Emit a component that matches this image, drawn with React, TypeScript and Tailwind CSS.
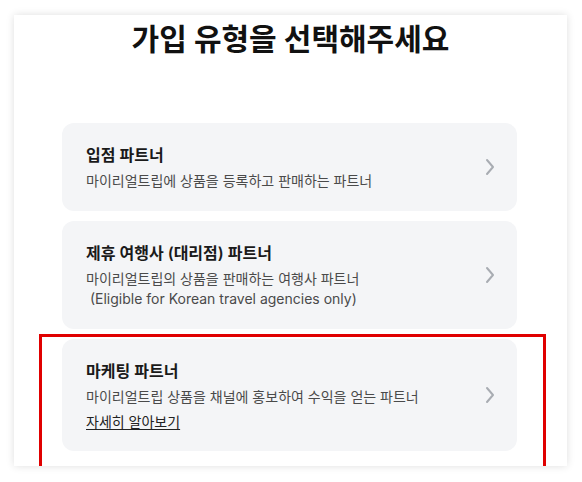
import React from "react";

const partnerTypes = [
  {
    title: "입점 파트너",
    desc: ["마이리얼트립에 상품을 등록하고 판매하는 파트너"],
  },
  {
    title: "제휴 여행사 (대리점) 파트너",
    desc: [
      "마이리얼트립의 상품을 판매하는 여행사 파트너",
      " (Eligible for Korean travel agencies only)",
    ],
  },
  {
    title: "마케팅 파트너",
    desc: ["마이리얼트립 상품을 채널에 홍보하여 수익을 얻는 파트너"],
    more: "자세히 알아보기",
  },
];

const Chevron = () => (
  <svg width="10" height="18" viewBox="0 0 10 18" fill="none" className="shrink-0">
    <path
      d="M2 2 L8 9 L2 16"
      stroke="#a8acb2"
      strokeWidth="2"
      strokeLinecap="round"
      strokeLinejoin="round"
    />
  </svg>
);

const App = () => {
  return (
    <div
      className="h-[482px] w-full bg-white pt-[15px] pl-[14px]"
      style={{ fontFamily: '"Inter", "Noto Sans CJK KR", sans-serif' }}
    >
      <div className="relative h-[451px] w-[553px] overflow-hidden bg-white shadow-[0_0_8px_rgba(0,0,0,0.13)]">
        <h1 className="pt-[4px] text-center text-[30px] font-bold leading-[40px] text-[#111]">
          가입 유형을 선택해주세요
        </h1>

        <div className="mt-[64px] ml-[48px] flex w-[455px] flex-col gap-[10px]">
          {partnerTypes.map((p, idx) => (
            <div
              key={idx}
              className="flex cursor-pointer items-center justify-between rounded-xl bg-[#f4f5f7] pt-5 pb-5 pl-6 pr-[22px]"
            >
              <div className="flex flex-col">
                <p className="text-[16px] font-semibold leading-6 text-[#1a1a1a]">
                  {p.title}
                </p>
                <div className="mt-1">
                  {p.desc.map((d, i) => (
                    <p
                      key={i}
                      className="whitespace-pre text-[14px] leading-5 text-[#4a4a4a]"
                    >
                      {d}
                    </p>
                  ))}
                </div>
                {p.more && (
                  <a className="mt-[6px] text-[14px] leading-[18px] text-[#222] underline underline-offset-2">
                    {p.more}
                  </a>
                )}
              </div>
              <Chevron />
            </div>
          ))}
        </div>

        {/* highlight box */}
        <div className="pointer-events-none absolute left-[25px] top-[319px] h-[200px] w-[507px] border-[3px] border-[#e00000]" />
      </div>
    </div>
  );
};

export default App;
